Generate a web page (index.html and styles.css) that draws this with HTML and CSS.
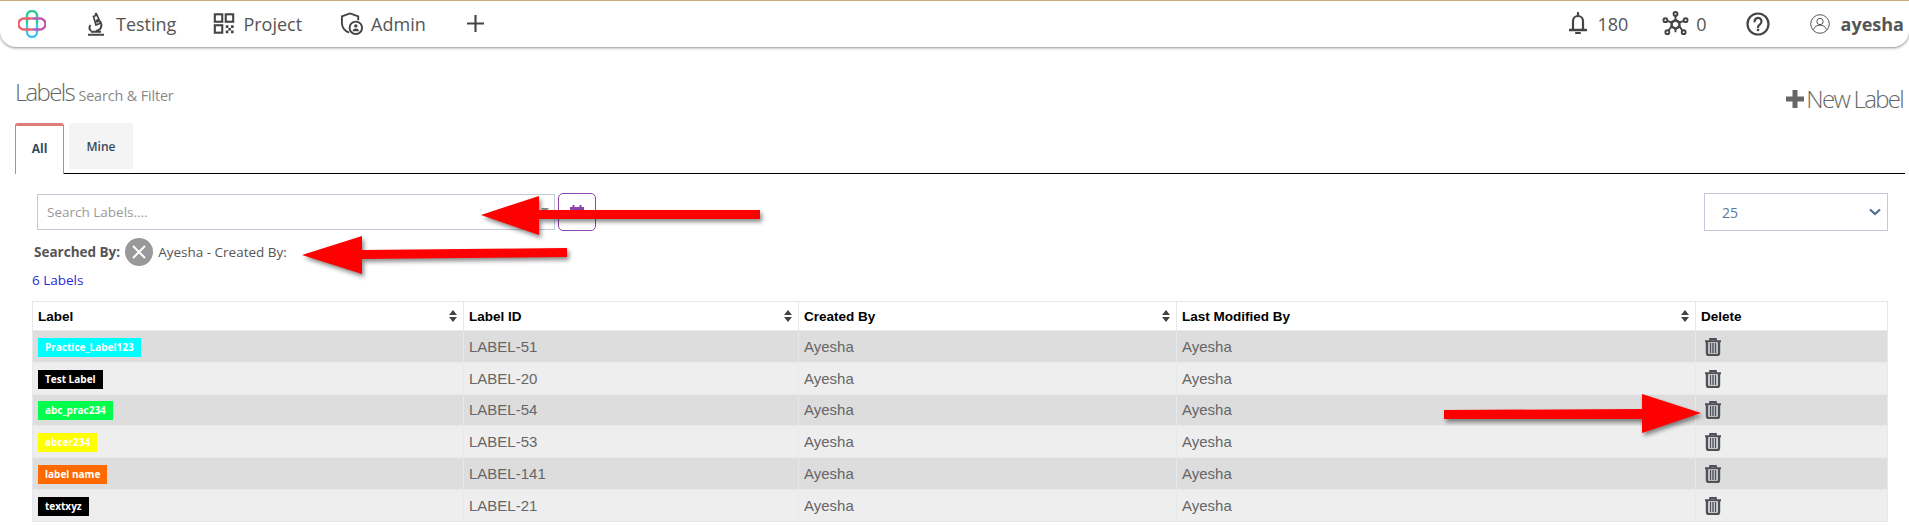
FILE: index.html
```html
<!DOCTYPE html>
<html lang="en">
<head>
<meta charset="utf-8">
<title>Labels</title>
<link rel="stylesheet" href="styles.css">
</head>
<body>
<nav class="nav">
  <svg class="logo" viewBox="0 0 28 28" fill="none" stroke-width="2.4" stroke-linecap="round">
    <path d="M9 13V6a5 5 0 0 1 10 0v7" stroke="#2fc99a"/>
    <path d="M9 15v7a5 5 0 0 0 10 0v-7" stroke="#3fc3ee"/>
    <path d="M13 8.500H6a5.500 5.500 0 0 0 0 11h7" stroke="#f0626d"/>
    <path d="M15 8.500h7a5.500 5.500 0 0 1 0 11h-7" stroke="#c056b0"/>
  </svg>
  <a class="nav-item testing">
    <svg class="ico" viewBox="0 0 18 24" fill="none" stroke="#444" stroke-width="2"><path d="M1 22.800h16M4 19.800h10" stroke-width="2"/><path d="M12 8.500c4 3 3 9.500-3 10.500M3.500 13c-1.500 2-1.500 4 .5 6"/><path d="M6.500 4.500L10 3l3.500 8-4.500 2z" fill="#fff" stroke-width="1.700"/><path d="M8.500 8l3-1.300 1 3-3 1.300z" fill="#444" stroke="none"/><circle cx="9" cy="2" r="1.300" fill="#444" stroke="none"/></svg>
    <span>Testing</span>
  </a>
  <a class="nav-item project">
    <svg class="ico" viewBox="0 0 24 24" fill="none" stroke="#444" stroke-width="2.400"><rect x="1.500" y="1.500" width="8.500" height="8.500"/><rect x="14" y="1.500" width="8.500" height="8.500"/><rect x="1.500" y="14" width="8.500" height="8.500"/><path d="M14 14h3v3h-3zM20 14h3v3h-3zM17 17h3v3h-3zM14 20h3v3h-3zM20 20h3v3h-3z" fill="#444" stroke="none"/></svg>
    <span>Project</span>
  </a>
  <a class="nav-item admin">
    <svg class="ico" viewBox="0 0 24 24" fill="none" stroke="#444" stroke-width="2"><path d="M10.500 1.500L2 4.500v7c0 5 3.500 8.500 7.500 10"/><path d="M10.500 1.500L19 4.500v4"/><circle cx="16.500" cy="16.500" r="6.500"/><circle cx="16.500" cy="14.500" r="1.800" fill="#444" stroke="none"/><path d="M13 20c.5-2 2-2.800 3.500-2.800S19.500 18 20 20z" fill="#444" stroke="none"/></svg>
    <span>Admin</span>
  </a>
  <svg class="plus" viewBox="0 0 16 16" fill="none" stroke="#444" stroke-width="2"><path d="M8 0v16M0 8h16"/></svg>
  <div class="nav-right">
    <svg class="bell" viewBox="0 0 18 24" fill="none" stroke="#444" stroke-width="2.200"><path d="M4 17V9a5 5 0 0 1 10 0v8"/><path d="M1 18h16" stroke-width="2.600" stroke-linecap="round"/><path d="M9 1v3M7 21h4" stroke-linecap="round"/></svg>
    <span class="count">180</span>
    <svg class="net" viewBox="0 0 28 26" fill="none" stroke="#444" stroke-width="2"><path d="M14 9.500l4 2.300v4.400l-4 2.300-4-2.300v-4.400z" stroke-width="2.600"/><path d="M14 4v5M14 19v3M10 12l-5-2M18 12l5-2M10 16l-3 4M18 16l3 4"/><circle cx="14" cy="3" r="2"/><circle cx="3.500" cy="9.500" r="2"/><circle cx="24.500" cy="9.500" r="2"/><circle cx="5.500" cy="22" r="2"/><circle cx="22.500" cy="22" r="2"/></svg>
    <span class="count zero">0</span>
    <svg class="help" viewBox="0 0 24 24" fill="none" stroke="#444" stroke-width="2.200"><circle cx="12" cy="12" r="10.500"/><path d="M8.500 9.500a3.500 3.500 0 1 1 5.500 2.800c-1.300.9-2 1.500-2 2.900" stroke-linecap="round"/><circle cx="12" cy="18" r="1.300" fill="#444" stroke="none"/></svg>
    <svg class="user" viewBox="0 0 20 20" fill="none" stroke="#555" stroke-width="1"><circle cx="10" cy="10" r="9.300"/><circle cx="10" cy="7.500" r="3.200"/><path d="M3.500 15.500c1-3 3.500-4.300 6.500-4.300s5.500 1.300 6.500 4.300"/></svg>
    <b class="uname">ayesha</b>
  </div>
</nav>

<main class="main">
  <header class="head">
    <h1 class="title">Labels <small>Search &amp; Filter</small></h1>
    <a class="new-label"><svg class="new-plus" viewBox="0 0 18 18"><path d="M6.500 0h5v6.500H18v5h-6.500V18h-5v-6.500H0v-5h6.500z" fill="#666"/></svg>New Label</a>
  </header>

  <div class="tabs">
    <a class="tab active">All</a>
    <a class="tab">Mine</a>
  </div>

  <section class="filters">
    <div class="filter-row">
      <div class="search">
        <input class="search-input" type="text" placeholder="Search Labels....">
        <i class="caret"></i>
      </div>
      <button class="cal">
        <svg viewBox="0 0 14 16" width="14" height="16" fill="none" stroke="#8e44ad" stroke-width="1"><rect x=".5" y="3.500" width="13" height="11"/><path d="M.5 3.500h13v3H.5z" fill="#8e44ad"/><path d="M3.500 1v3M10.500 1v3" stroke-width="2"/><path d="M5 7v7M9 7v7M1 10.500h12"/></svg>
      </button>
      <div class="page-size"><span>25</span><svg width="12" height="8" viewBox="0 0 12 8" fill="none" stroke="#4f6f94" stroke-width="2.200"><path d="M1 1.500l5 4.500 5-4.500"/></svg></div>
    </div>
    <div class="searched">
      <b>Searched By:</b>
      <span class="clear"><svg viewBox="0 0 14 14" width="14" height="14" fill="none" stroke="#fff" stroke-width="2"><path d="M1 1l12 12M13 1L1 13"/></svg></span>
      <span>Ayesha - Created By:</span>
    </div>
    <p class="result">6 Labels</p>
  </section>

  <table class="grid">
    <colgroup><col class="c1"><col class="c2"><col class="c3"><col class="c4"><col></colgroup>
    <thead>
      <tr>
        <th><div class="th-in">Label<i class="sort"></i></div></th>
        <th><div class="th-in">Label ID<i class="sort"></i></div></th>
        <th><div class="th-in">Created By<i class="sort"></i></div></th>
        <th><div class="th-in">Last Modified By<i class="sort"></i></div></th>
        <th>Delete</th>
      </tr>
    </thead>
    <tbody>
      <tr><td><span class="badge cyan">Practice_Label123</span></td><td>LABEL-51</td><td>Ayesha</td><td>Ayesha</td><td><svg class="trash" viewBox="0 0 16 18"><use href="#trash"/></svg></td></tr>
      <tr><td><span class="badge black">Test Label</span></td><td>LABEL-20</td><td>Ayesha</td><td>Ayesha</td><td><svg class="trash" viewBox="0 0 16 18"><use href="#trash"/></svg></td></tr>
      <tr><td><span class="badge green">abc_prac234</span></td><td>LABEL-54</td><td>Ayesha</td><td>Ayesha</td><td><svg class="trash" viewBox="0 0 16 18"><use href="#trash"/></svg></td></tr>
      <tr><td><span class="badge yellow">abcer234</span></td><td>LABEL-53</td><td>Ayesha</td><td>Ayesha</td><td><svg class="trash" viewBox="0 0 16 18"><use href="#trash"/></svg></td></tr>
      <tr><td><span class="badge orange">label name</span></td><td>LABEL-141</td><td>Ayesha</td><td>Ayesha</td><td><svg class="trash" viewBox="0 0 16 18"><use href="#trash"/></svg></td></tr>
      <tr><td><span class="badge black">textxyz</span></td><td>LABEL-21</td><td>Ayesha</td><td>Ayesha</td><td><svg class="trash" viewBox="0 0 16 18"><use href="#trash"/></svg></td></tr>
    </tbody>
  </table>
</main>

<svg class="defs" width="0" height="0">
  <symbol id="trash" viewBox="0 0 16 18">
    <path d="M0 3.300h16M5.200 3V1h5.600v2" fill="none" stroke="#4d5057" stroke-width="2"/>
    <path d="M2 4v11.500A1.800 1.800 0 0 0 3.800 17h8.400a1.800 1.800 0 0 0 1.800-1.800V4" fill="none" stroke="#4d5057" stroke-width="2.400"/>
    <path d="M5.500 5v10M8 5v10M10.500 5v10" fill="none" stroke="#4d5057" stroke-width="1.500"/>
  </symbol>
</svg>

<svg class="arrows" viewBox="0 0 1909 525" width="1909" height="525">
  <path d="M481 215L539 196V210L760 210V219L539 219V235Z"/>
  <path d="M302 255L362 236V250L567 248V257L362 259V274Z"/>
  <path d="M1444 410L1642 409V394L1701 413L1642 433V419L1444 419Z"/>
</svg>
</body>
</html>
```

FILE: styles.css
```css
* { box-sizing: border-box; }
html, body { margin: 0; padding: 0; }
body {
  width: 1909px;
  height: 525px;
  overflow: hidden;
  position: relative;
  background: #fff;
  font-family: "Open Sans", "Liberation Sans", sans-serif;
  color: #555;
}

/* top bar */
.nav {
  height: 47px;
  display: flex;
  align-items: center;
  border-top: 1px solid #c9ab7c;
  border-radius: 0 0 16px 16px;
  box-shadow: 0 1px 3px rgba(0, 0, 0, .45);
  padding: 0 5px 1px 18px;
  font-size: 18px;
  color: #555;
}
.logo { width: 28px; height: 28px; flex: none; }
.nav-item { display: flex; align-items: center; }
.ico { flex: none; width: 20px; height: 20px; }
.testing { margin-left: 41px; gap: 11px; }
.testing .ico { width: 18px; height: 24px; }
.project { margin-left: 37px; gap: 8px; }
.project .ico { width: 22px; height: 21px; }
.admin { margin-left: 38px; gap: 8px; }
.admin .ico { width: 23px; height: 23px; }
.plus { width: 17px; height: 17px; margin-left: 41px; flex: none; }
.nav-right { margin-left: auto; display: flex; align-items: center; }
.bell { width: 18px; height: 24px; }
.count { margin-left: 10px; }
.net { width: 27px; height: 25px; margin-left: 34px; }
.zero { margin-left: 7px; }
.help { width: 24px; height: 24px; margin-left: 39px; }
.user { width: 20px; height: 20px; margin-left: 40px; }
.uname { margin-left: 11px; color: #555; font-weight: 700; }

/* heading */
.main { padding: 0 4px 0 15px; }
.head {
  display: flex;
  justify-content: space-between;
  align-items: flex-start;
  padding-top: 28px;
  height: 76px;
}
.title {
  margin: 0;
  font-size: 24px;
  line-height: 33px;
  font-weight: 300;
  letter-spacing: -1.700px;
  color: #666;
}
.title small { font-size: 14.300px; font-weight: 400; color: #888; letter-spacing: -.1px; }
.new-label {
  display: flex;
  align-items: center;
  margin-top: 7px;
  padding-right: 2px;
  font-size: 24px;
  line-height: 33px;
  font-weight: 300;
  letter-spacing: -1.700px;
  color: #666;
}
.new-plus { width: 18px; height: 18px; margin-right: 2px; }

/* tabs */
.tabs {
  display: flex;
  gap: 5px;
  height: 51px;
  border-bottom: 1px solid #000;
  align-items: flex-start;
}
.tab {
  width: 64px;
  height: 46px;
  background: #f4f4f4;
  border-radius: 3px 3px 0 0;
  display: flex;
  align-items: center;
  justify-content: center;
  font-size: 12px;
  font-weight: 600;
  color: #34495e;
}
.tab.active {
  width: 49px;
  height: 51px;
  background: #fff;
  border: 1px solid #dd7c7c;
  border-top: 3px solid #dd7c7c;
  border-bottom: 0;
  padding-bottom: 4px;
  font-weight: 700;
  margin-bottom: -1px;
}

/* filters */
.filters { padding: 19px 0 0 12px; }
.filter-row { display: flex; align-items: flex-start; padding: 0 17px 0 10px; }
.search { position: relative; margin-top: 1px; }
.search-input {
  display: block;
  width: 518px;
  height: 36px;
  border: 1px solid #c0c8da;
  padding: 0 9px;
  font: 13.500px "Open Sans", sans-serif;
  color: #555;
  outline: 0;
}
.search-input::placeholder { color: #999; opacity: 1; }
.caret {
  position: absolute;
  top: 14px;
  right: 6px;
  border: 4px solid transparent;
  border-top: 5px solid #888;
}
.cal {
  width: 38px;
  height: 38px;
  margin-left: 3px;
  padding: 0;
  background: #fff;
  border: 1px solid #8e44ad;
  border-radius: 5px;
  display: flex;
  align-items: center;
  justify-content: center;
}
.page-size {
  margin-left: auto;
  width: 184px;
  height: 38px;
  border: 1px solid #c0c8da;
  display: flex;
  align-items: center;
  justify-content: space-between;
  padding: 0 6px 0 17px;
  font-size: 14px;
  color: #5d7a9c;
}
.searched {
  display: flex;
  align-items: center;
  height: 28px;
  margin-top: 7px;
  padding-left: 7px;
  font-size: 13.500px;
  color: #555;
  gap: 5px;
}
.searched b { font-weight: 700; }
.clear {
  width: 28px;
  height: 28px;
  border-radius: 50%;
  background: #999;
  display: flex;
  align-items: center;
  justify-content: center;
}
.result {
  margin: 5px 0 0 5px;
  font-size: 13.500px;
  line-height: 18px;
  color: #2a2ae0;
}

/* table */
.grid {
  border-collapse: collapse;
  table-layout: fixed;
  width: 1856px;
  margin: 12px 0 0 17px;
  font-family: "Liberation Sans", Arial, sans-serif;
}
.c1 { width: 431px; }
.c2 { width: 335px; }
.c3 { width: 378px; }
.c4 { width: 519px; }
.grid th {
  height: 29px;
  padding: 0 5px;
  border: 1px solid #e8e8e8;
  background: #fff;
  text-align: left;
  font-size: 13.500px;
  font-weight: 700;
  color: #000;
}
.th-in { display: flex; align-items: center; justify-content: space-between; padding-right: 1px; }
.sort { position: relative; width: 8px; height: 12px; }
.sort::before, .sort::after {
  content: "";
  position: absolute;
  left: 0;
  border: 4px solid transparent;
}
.sort::before { top: -4px; border-bottom: 5px solid #444; }
.sort::after { bottom: -4px; border-top: 5px solid #444; }
.grid td {
  height: 31.800px;
  padding: 0 5px;
  border: 1px solid #e6e9ec;
  font-size: 15px;
  color: #666;
  vertical-align: middle;
}
.grid tbody tr:nth-child(odd) td { background: #ddd; }
.grid tbody tr:nth-child(even) td { background: #eee; }
.badge {
  display: inline-block;
  height: 19px;
  margin-top: 2px;
  padding: 0 7px;
  font: 700 10px/19px "Open Sans", sans-serif;
  color: #fff;
  vertical-align: middle;
}
.cyan { background: #00ffff; }
.black { background: #000; }
.green { background: #00ff4c; }
.yellow { background: #ffff00; }
.orange { background: #ff6a00; }
.trash { display: block; width: 16px; height: 18px; margin: 1px 0 0 4px; }

.defs { position: absolute; }
.arrows {
  position: absolute;
  left: 0;
  top: 0;
  pointer-events: none;
  fill: #ff0000;
  filter: drop-shadow(2px 3px 2px rgba(0, 0, 0, .45));
}
```
